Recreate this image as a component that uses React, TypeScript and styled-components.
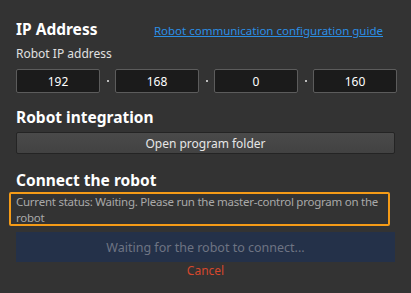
import { createGlobalStyle, styled } from 'styled-components';

const GlobalStyle = createGlobalStyle`
  html, body {
    margin: 0;
    padding: 0;
    background: #333333;
  }
  body {
    font-family: 'Noto Sans', 'Open Sans', sans-serif;
  }
`;

const ipParts = ['192', '168', '0', '160'];

export default function App() {
  return (
    <>
      <GlobalStyle />
      <Page>
        <HeaderRow>
          <Title>IP Address</Title>
          <GuideLink href="#">Robot communication configuration guide</GuideLink>
        </HeaderRow>
        <Label>Robot IP address</Label>
        <IpRow>
          {ipParts.map((part, i) => (
            <IpCell key={i}>
              {i > 0 && <IpDot />}
              <IpInput value={part} readOnly />
            </IpCell>
          ))}
        </IpRow>

        <Section $gap={13}>
          <Title>Robot integration</Title>
          <FolderButton>Open program folder</FolderButton>
        </Section>

        <Section $gap={15}>
          <Title>Connect the robot</Title>
          <StatusBox>
            Current status: Waiting. Please run the master-control program on the robot
          </StatusBox>
          <WaitButton disabled>Waiting for the robot to connect...</WaitButton>
          <CancelLink>Cancel</CancelLink>
        </Section>
      </Page>
    </>
  );
}

const Page = styled.div`
  width: 411px;
  height: 293px;
  box-sizing: border-box;
  padding: 18px 16px 0 16px;
  background: #333333;
  display: flex;
  flex-direction: column;
  overflow: hidden;
`;

const HeaderRow = styled.div`
  display: flex;
  align-items: baseline;
  justify-content: space-between;
  padding-right: 12px;
`;

const Title = styled.div`
  color: #ffffff;
  font-size: 15.5px;
  font-weight: 700;
  line-height: 22px;
`;

const GuideLink = styled.a`
  color: #2b8fe6;
  font-size: 11.5px;
  text-decoration: underline;
`;

const Label = styled.div`
  color: #e0e0e0;
  font-size: 12px;
  line-height: 18px;
  margin-top: 5px;
`;

const IpRow = styled.div`
  display: flex;
  margin-top: 6px;
`;

const IpCell = styled.div`
  display: flex;
  align-items: center;
`;

const IpDot = styled.span`
  width: 15px;
  display: flex;
  justify-content: center;

  &::before {
    content: '';
    width: 2px;
    height: 2px;
    background: #bbbbbb;
  }
`;

const IpInput = styled.input`
  width: 84px;
  height: 24px;
  box-sizing: border-box;
  background: #1b1b1b;
  border: 1px solid #5c5c5c;
  border-radius: 2px;
  color: #ffffff;
  font-family: 'Noto Sans', sans-serif;
  font-size: 12px;
  text-align: center;
  padding: 0;
  outline: none;
`;

const Section = styled.div<{ $gap: number }>`
  display: flex;
  flex-direction: column;
  margin-top: ${({ $gap }) => $gap}px;
`;

const FolderButton = styled.button`
  margin-top: 4px;
  width: 379px;
  height: 22px;
  box-sizing: border-box;
  background: linear-gradient(#4a4a4a, #424242);
  border: 1px solid #242424;
  border-radius: 2px;
  color: #e6e6e6;
  font-family: 'Noto Sans', sans-serif;
  font-size: 12px;
  padding: 0;
`;

const StatusBox = styled.div`
  margin: 1px 0 0 -7px;
  width: 381px;
  height: 34px;
  box-sizing: border-box;
  border: 2px solid #f59b17;
  border-radius: 2px;
  padding: 0 0 0 5px;
  color: #a9a9a9;
  font-size: 11.5px;
  letter-spacing: -0.25px;
  line-height: 16px;
  overflow: hidden;
`;

const WaitButton = styled.button`
  margin-top: 6px;
  width: 379px;
  height: 30px;
  background: #243149;
  border: none;
  color: #6e7483;
  font-family: 'Noto Sans', sans-serif;
  font-size: 12.5px;
  padding: 0;
`;

const CancelLink = styled.div`
  align-self: center;
  color: #d6472c;
  font-size: 12px;
  line-height: 16px;
  margin-top: 1px;
`;
